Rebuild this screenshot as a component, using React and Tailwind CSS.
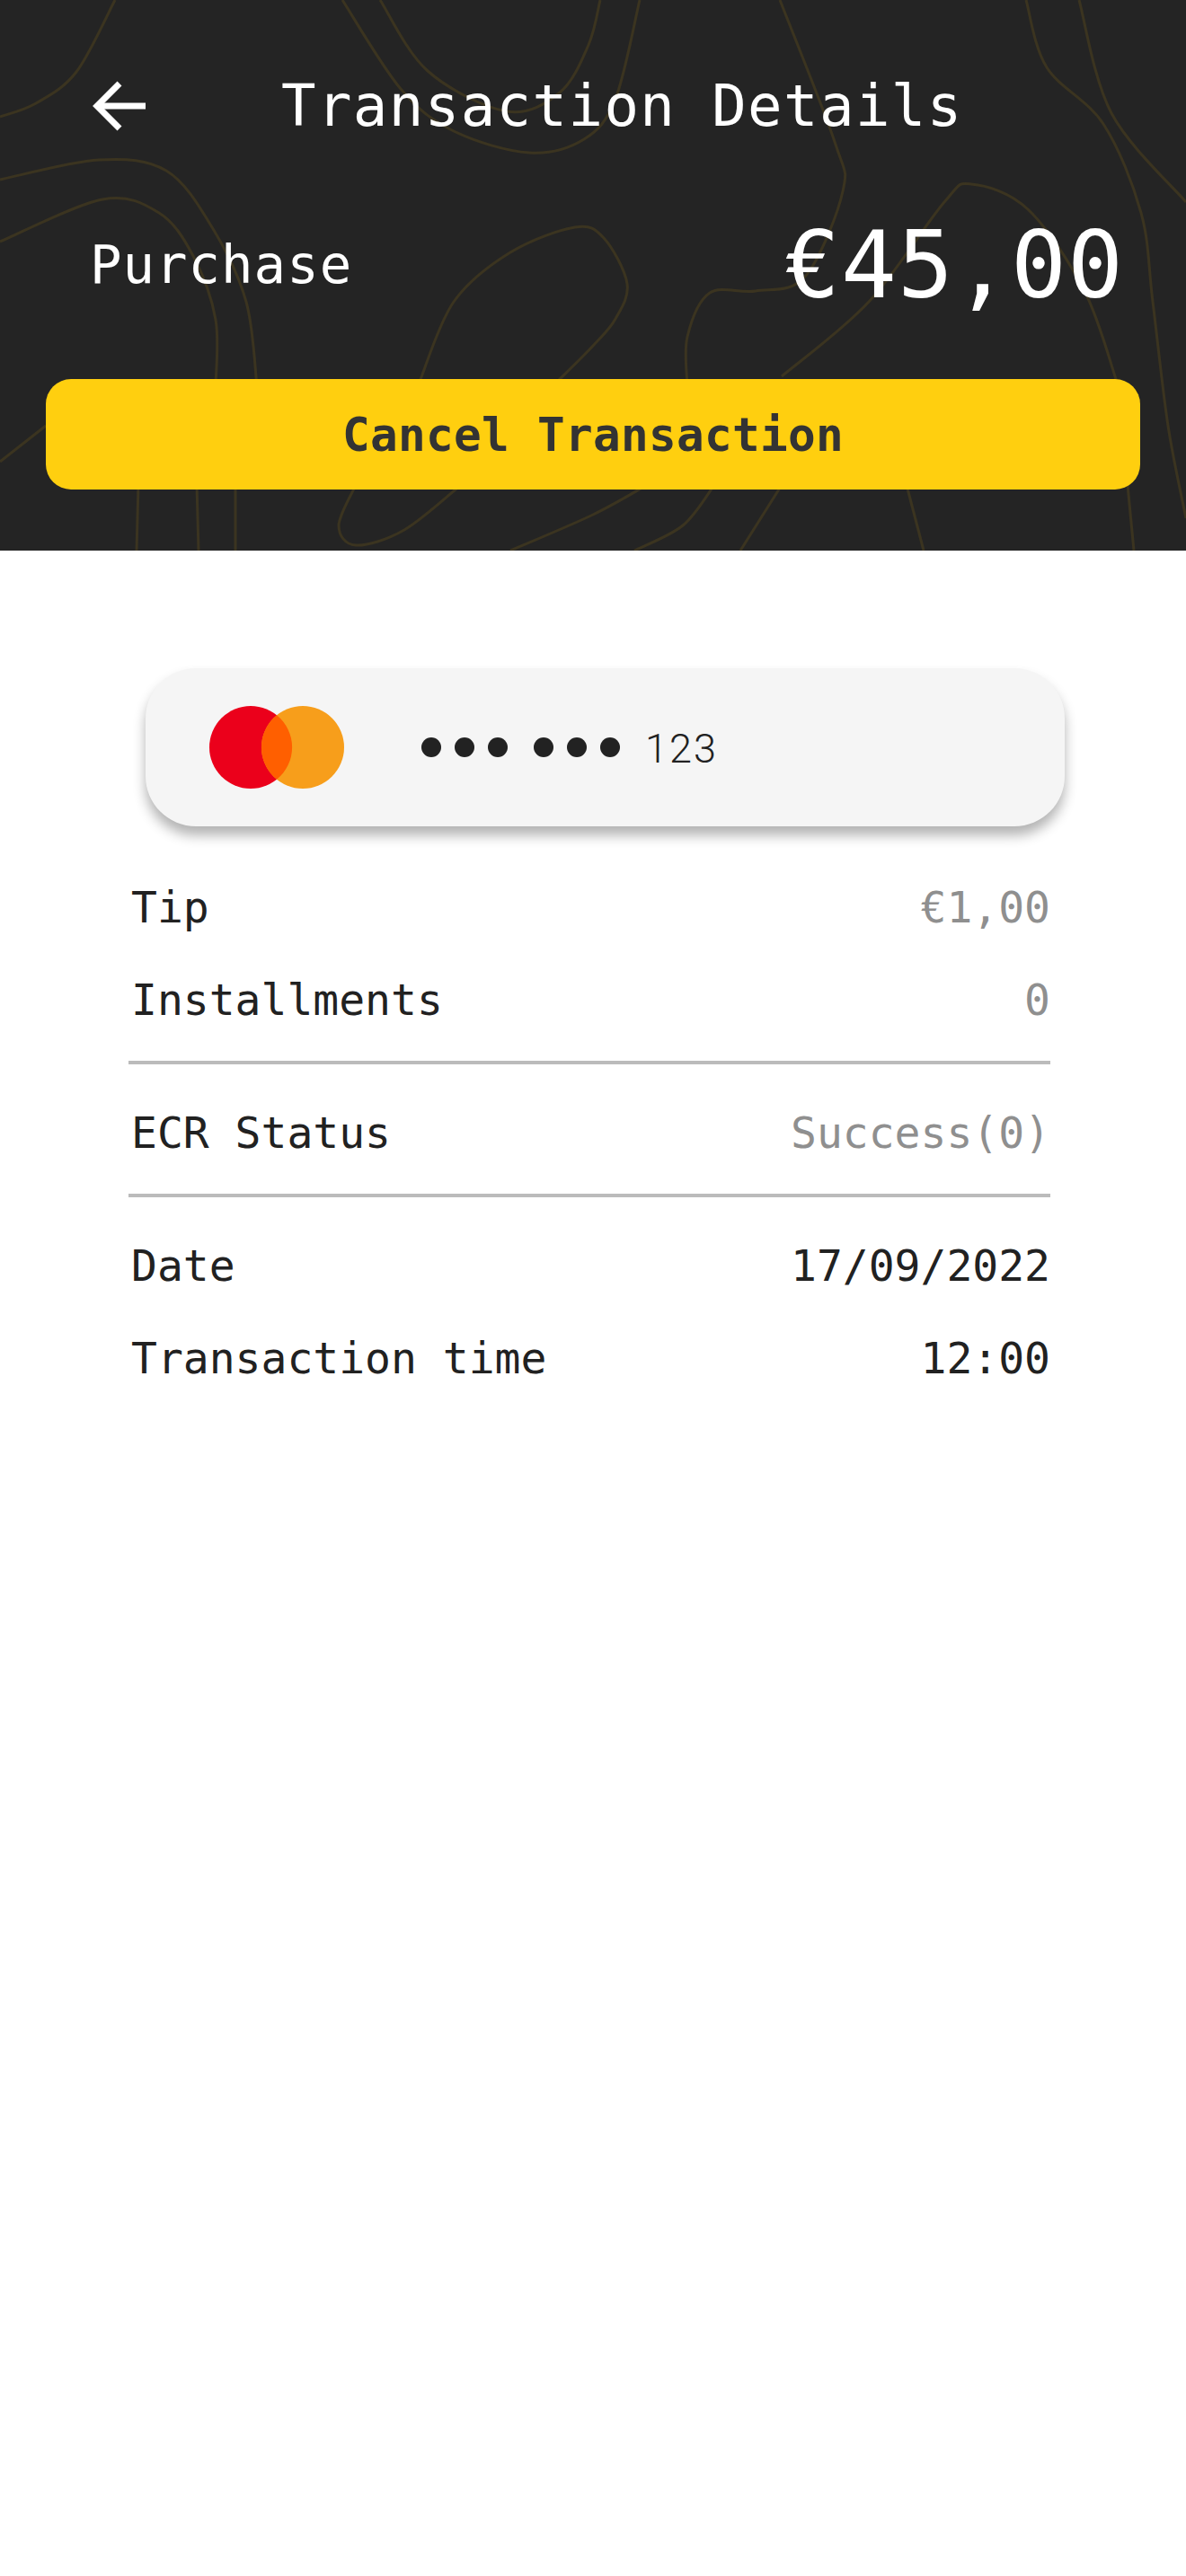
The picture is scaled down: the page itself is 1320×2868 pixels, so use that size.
// contour lines behind the header, as points in page pixels
const contours = [
  [[128, 0], [85, 80], [40, 115], [0, 130]],
  [[0, 200], [110, 178], [185, 190], [236, 253], [274, 336], [286, 430]],
  [[0, 269], [114, 222], [177, 237], [215, 285], [240, 356], [240, 430]],
  [[154, 540], [152, 613]],
  [[219, 540], [221, 613]],
  [[262, 540], [262, 613]],
  [[381, 0], [446, 99], [505, 146], [589, 170], [650, 155], [685, 110], [712, 0]],
  [[423, 0], [476, 79], [564, 124], [623, 103], [655, 50], [668, 0]],
  [[467, 425], [505, 336], [568, 281], [640, 253], [672, 265], [698, 316], [685, 355], [660, 385], [620, 425]],
  [[513, 540], [450, 590], [396, 607], [377, 585], [396, 540]],
  [[868, 0], [929, 158], [938, 213], [896, 308], [841, 324], [790, 326], [765, 375], [765, 430]],
  [[795, 540], [760, 585], [706, 613]],
  [[870, 540], [824, 613]],
  [[870, 419], [967, 336], [1051, 225], [1081, 205], [1144, 233], [1207, 324], [1243, 425]],
  [[1009, 540], [1028, 613]],
  [[1142, 0], [1165, 75], [1228, 138], [1270, 237], [1283, 336], [1300, 474], [1320, 577]],
  [[1201, 0], [1237, 126], [1320, 225]],
  [[0, 514], [51, 474]],
  [[568, 613], [660, 573], [720, 540]],
  [[1255, 540], [1262, 613]],
];

// catmull-rom through the points
const smoothPath = (pts) => {
  let d = `M${pts[0][0]} ${pts[0][1]}`;
  for (let i = 0; i < pts.length - 1; i++) {
    const p0 = pts[i - 1] || pts[i];
    const p1 = pts[i];
    const p2 = pts[i + 1];
    const p3 = pts[i + 2] || p2;
    const c1x = p1[0] + (p2[0] - p0[0]) / 6;
    const c1y = p1[1] + (p2[1] - p0[1]) / 6;
    const c2x = p2[0] - (p3[0] - p1[0]) / 6;
    const c2y = p2[1] - (p3[1] - p1[1]) / 6;
    d += ` C${c1x} ${c1y} ${c2x} ${c2y} ${p2[0]} ${p2[1]}`;
  }
  return d;
};

const Row = ({ label, value, muted }) => (
  <div className="flex h-[103px] items-center justify-between pr-0 pl-[3px]">
    <span>{label}</span>
    <span className={muted ? "text-[#8f8f8f]" : ""}>{value}</span>
  </div>
);

const Divider = () => <div className="mt-[17px] mb-[24px] h-[4px] bg-[#bbbbbb]" />;

const BackArrow = () => (
  <svg className="ml-[102px]" width="60" height="60" viewBox="0 0 60 60" fill="none" stroke="white" strokeWidth="7">
    <path d="M60 30H8" />
    <path d="M31 5L6 30L31 55" />
  </svg>
);

const Mastercard = () => (
  <svg width="150" height="92" viewBox="0 0 150 92">
    <circle cx="46" cy="46" r="46" fill="#eb001b" />
    <circle cx="104" cy="46" r="46" fill="#f79e1b" />
    <path d="M75 10.2a46 46 0 0 1 0 71.6a46 46 0 0 1 0-71.6z" fill="#ff5f00" />
  </svg>
);

const Dots = () => (
  <div className="flex gap-[15px]">
    <span className="size-[22px] rounded-full bg-[#222222]" />
    <span className="size-[22px] rounded-full bg-[#222222]" />
    <span className="size-[22px] rounded-full bg-[#222222]" />
  </div>
);

export default function App() {
  return (
    <div className="min-h-[2868px] bg-white font-['DejaVu_Sans_Mono',monospace] text-[#212121]">
      <header className="relative h-[613px] overflow-hidden bg-[#242424] text-white">
        <svg className="absolute inset-0" width="1320" height="613" fill="none" stroke="#3b3420" strokeWidth="3">
          {contours.map((pts, i) => (
            <path key={i} d={smoothPath(pts)} />
          ))}
        </svg>
        <div className="relative flex h-[613px] flex-col">
          <div className="mt-[70px] flex h-[96px] items-center">
            <BackArrow />
            <h1 className="ml-[151px] text-[64px] tracking-[1.4px]">Transaction Details</h1>
          </div>
          <div className="mt-[74px] flex h-[110px] items-center justify-between pr-[69px] pl-[100px]">
            <span className="text-[59px] tracking-[1px]">Purchase</span>
            <span className="text-[103px] tracking-[1px]">€45,00</span>
          </div>
          <button className="mx-[51px] mt-[72px] h-[123px] rounded-[28px] bg-[#ffcf0f] pt-[4px] text-[51px] font-bold tracking-[0.3px] text-[#333333]">
            Cancel Transaction
          </button>
        </div>
      </header>

      <main>
        <div className="mt-[131px] ml-[162px] flex h-[176px] w-[1023px] items-center rounded-[56px] bg-[#f5f5f5] pl-[71px] shadow-[0_10px_14px_rgba(0,0,0,0.3)]">
          <Mastercard />
          <div className="ml-[86px] flex items-center gap-[29px]">
            <Dots />
            <Dots />
          </div>
          <span className="mt-[4px] ml-[28px] font-['Roboto',sans-serif] text-[45px] font-light tracking-[2px]">123</span>
        </div>

        <section className="mt-[38px] ml-[143px] w-[1026px] text-[48px]">
          <Row label="Tip" value="€1,00" muted />
          <Row label="Installments" value="0" muted />
          <Divider />
          <Row label="ECR Status" value="Success(0)" muted />
          <Divider />
          <Row label="Date" value="17/09/2022" />
          <Row label="Transaction time" value="12:00" />
        </section>
      </main>
    </div>
  );
}
